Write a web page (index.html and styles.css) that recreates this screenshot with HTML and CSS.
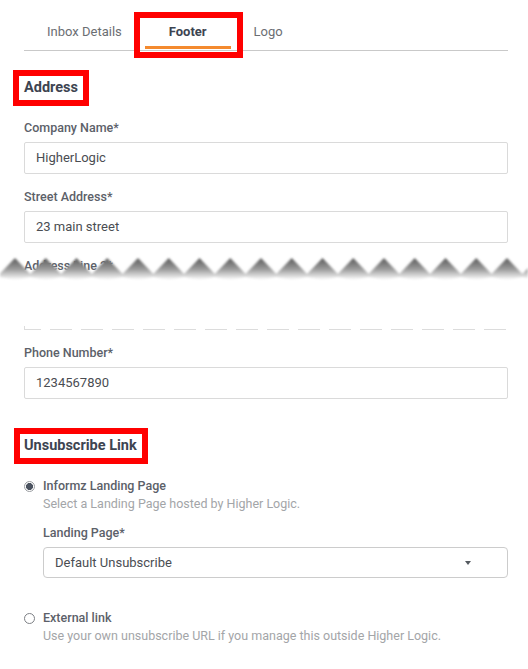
FILE: index.html
```html
<!DOCTYPE html>
<html lang="en">
<head>
<meta charset="utf-8">
<title>Footer settings</title>
<link rel="stylesheet" href="styles.css">
</head>
<body>
<div class="page">
  <nav class="tabs">
    <div class="tab">Inbox Details</div>
    <div class="tab tab-active">Footer</div>
    <div class="tab">Logo</div>
  </nav>

  <h2 class="heading">Address</h2>

  <div class="field">
    <div class="label">Company Name*</div>
    <div class="input">HigherLogic</div>
  </div>

  <div class="field">
    <div class="label">Street Address*</div>
    <div class="input">23 main street</div>
  </div>

  <div class="torn">
    <div class="label">Address Line 2*</div>
    <svg class="tear" width="528" height="30" viewBox="0 0 528 30" aria-hidden="true">
      <defs>
        <linearGradient id="shade" x1="0" y1="0" x2="0" y2="1">
          <stop offset="0" stop-color="#5a5a5a"/>
          <stop offset="0.5" stop-color="#9a9a9a"/>
          <stop offset="1" stop-color="#ffffff"/>
        </linearGradient>
        <pattern id="teeth" x="-0.4" y="0" width="30.75" height="30" patternUnits="userSpaceOnUse">
          <polygon points="0,18 15.4,2 30.75,18 30.75,21 15.4,24 0,21" fill="url(#shade)"/>
        </pattern>
        <filter id="soft" x="-2%" y="-20%" width="104%" height="140%">
          <feGaussianBlur stdDeviation="0.8"/>
        </filter>
      </defs>
      <rect x="0" y="0" width="528" height="30" fill="url(#teeth)" filter="url(#soft)"/>
    </svg>
    <div class="torn-edge"></div>
  </div>

  <div class="field">
    <div class="label">Phone Number*</div>
    <div class="input">1234567890</div>
  </div>

  <h2 class="heading heading-unsub">Unsubscribe Link</h2>

  <div class="option">
    <span class="radio radio-on"></span>
    <div class="option-body">
      <div class="option-title">Informz Landing Page</div>
      <div class="option-desc">Select a Landing Page hosted by Higher Logic.</div>
      <div class="sub-field">
        <div class="label">Landing Page*</div>
        <div class="select">
          <span>Default Unsubscribe</span>
          <span class="caret"></span>
        </div>
      </div>
    </div>
  </div>

  <div class="option option-second">
    <span class="radio"></span>
    <div class="option-body">
      <div class="option-title">External link</div>
      <div class="option-desc">Use your own unsubscribe URL if you manage this outside Higher Logic.</div>
    </div>
  </div>
</div>
</body>
</html>
```

FILE: styles.css
```css
* { box-sizing: border-box; }

body {
  margin: 0;
  background: #ffffff;
  font-family: Roboto, "Liberation Sans", Arial, sans-serif;
  color: #444a52;
}

.page {
  padding: 0 20px 0 24px;
}

/* Tabs */
.tabs {
  display: flex;
  align-items: flex-start;
  height: 51px;
  border-bottom: 1px solid #c9c9c9;
}

.tab {
  position: relative;
  padding: 23px 23px 5px;
  font-size: 13px;
  line-height: 18px;
  color: #6b6e73;
}

.tab-active {
  padding: 23px 24px 5px;
  font-weight: 700;
  color: #3d4451;
  border-bottom: 3px solid #f48a2e;
}

.tab-active::after {
  content: "";
  position: absolute;
  left: -11px;
  right: -12px;
  top: 12px;
  bottom: -12px;
  border: 6px solid #ff0000;
}

/* Headings with red annotation box */
.heading {
  display: inline-block;
  margin: 19px 0 0 -11px;
  padding: 0 5px;
  border: 6px solid #ff0000;
  font-size: 14.5px;
  line-height: 24px;
  font-weight: 700;
  color: #3d4451;
}

.heading-unsub {
  margin-top: 29px;
  margin-left: -10px;
  padding: 0 5px 0 4px;
}

/* Fields */
.field {
  margin-top: 14px;
}

.field + .field {
  margin-top: 15px;
}

.label {
  font-size: 12.5px;
  line-height: 16px;
  font-weight: 500;
  color: #5c6169;
  margin-bottom: 6px;
}

.input {
  height: 32px;
  border: 1px solid #dadada;
  border-radius: 2px;
  padding: 0 11px;
  font-size: 13px;
  line-height: 30px;
  color: #4a4d52;
}

/* Torn section */
.torn {
  position: relative;
  display: flex;
  flex-direction: column;
  height: 72px;
  margin-top: 15px;
  margin-bottom: 15px;
}

.torn .label {
  margin: 0;
}

.tear {
  position: absolute;
  left: -24px;
  top: -2px;
  display: block;
}

.torn-edge {
  margin-top: auto;
  height: 4px;
  border-left: 1px solid #dcdcdc;
  background-image: linear-gradient(to right, #dcdcdc 0 22px, transparent 22px);
  background-size: 31px 1px;
  background-repeat: repeat-x;
  background-position: -6px 100%;
}

.torn + .field {
  margin-top: 0;
}

/* Radio options */
.option {
  display: grid;
  grid-template-columns: 19px 1fr;
  margin-top: 14px;
}

.option-second {
  margin-top: 32px;
}

.radio {
  width: 11px;
  height: 11px;
  margin-top: 2.5px;
  border: 1px solid #7d8085;
  border-radius: 50%;
  background: #ffffff;
}

.radio-on {
  border-color: #9a9da1;
  background: radial-gradient(circle, #4b5360 0 3.2px, #ffffff 3.8px);
}

.option-title {
  font-size: 12.5px;
  line-height: 16px;
  font-weight: 500;
  color: #5c6169;
}

.option-desc {
  font-size: 12.5px;
  line-height: 19px;
  color: #a3a5a8;
}

.sub-field {
  margin-top: 12px;
}

.select {
  display: flex;
  align-items: center;
  justify-content: space-between;
  height: 31px;
  border: 1px solid #cccccc;
  border-radius: 4px;
  padding: 0 36px 0 11px;
  font-size: 13px;
  color: #4a4d52;
}

.caret {
  width: 0;
  height: 0;
  border-left: 3.5px solid transparent;
  border-right: 3.5px solid transparent;
  border-top: 4px solid #555a60;
}
```
